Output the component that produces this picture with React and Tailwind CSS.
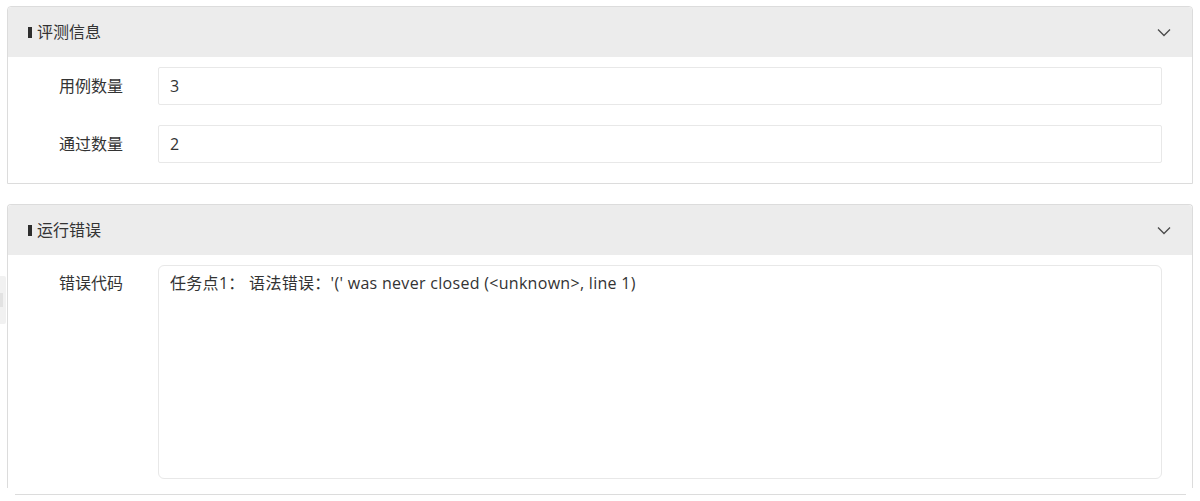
import React from "react";

const font = { fontFamily: '"Open Sans", "Noto Sans CJK SC", sans-serif' };

function Chevron() {
  return (
    <svg width="14" height="9" viewBox="0 0 14 9" fill="none">
      <path d="M1 1.5 L7 7.5 L13 1.5" stroke="#4a4a4a" strokeWidth="1.3" />
    </svg>
  );
}

function Header({ title }) {
  return (
    <div className="h-[50px] bg-[#ececec] flex items-center justify-between pl-[20px] pr-[21px] rounded-t-[4px]">
      <div className="flex items-center gap-[5px]">
        <span className="w-[4px] h-[11px] bg-[#2e2e2e]" />
        <span className="text-[16px] text-[#333333]">{title}</span>
      </div>
      <Chevron />
    </div>
  );
}

function Row({ label, value }) {
  return (
    <div className="flex items-center">
      <div className="w-[150px] pr-[35px] text-right text-[16px] text-[#333333]">{label}</div>
      <div className="flex-1 mr-[30px] h-[38px] border border-[#e8e8e8] rounded-[2px] flex items-center pl-[11px] text-[16px] text-[#333333]">
        {value}
      </div>
    </div>
  );
}

export default function App() {
  return (
    <div style={font} className="relative w-[1200px] h-[501px] bg-white overflow-hidden pt-[6px] px-[7px]">
      <div className="absolute left-0 top-[276px] w-[6px] h-[48px] bg-[#f1f1f1] rounded-r-[2px] flex items-center">
        <div className="w-[3px] h-[14px] bg-[#e2e2e2]" />
      </div>

      <div className="border border-[#dcdcdc] rounded-t-[4px]">
        <Header title="评测信息" />
        <div className="pt-[10px] pb-[20px] flex flex-col gap-[20px]">
          <Row label="用例数量" value="3" />
          <Row label="通过数量" value="2" />
        </div>
      </div>

      <div className="mt-[20px] border-t border-l border-r border-[#dcdcdc] rounded-t-[4px]">
        <Header title="运行错误" />
        <div className="pt-[10px] pb-[9px] flex items-start">
          <div className="w-[150px] pr-[35px] text-right text-[16px] text-[#333333] pt-[6px]">错误代码</div>
          <div className="flex-1 mr-[30px] h-[214px] border border-[#e8e8e8] rounded-[6px] pt-[5px] pl-[11px] text-[16px] leading-[24px] tracking-[0.3px] text-[#333333]">
            任务点1：&nbsp;语法错误：'(' was never closed (&lt;unknown&gt;, line 1)
          </div>
        </div>
      </div>

      <div className="mt-[6px] ml-[8px] mr-[7px] h-[1px] bg-[#dcdcdc]" />
    </div>
  );
}
